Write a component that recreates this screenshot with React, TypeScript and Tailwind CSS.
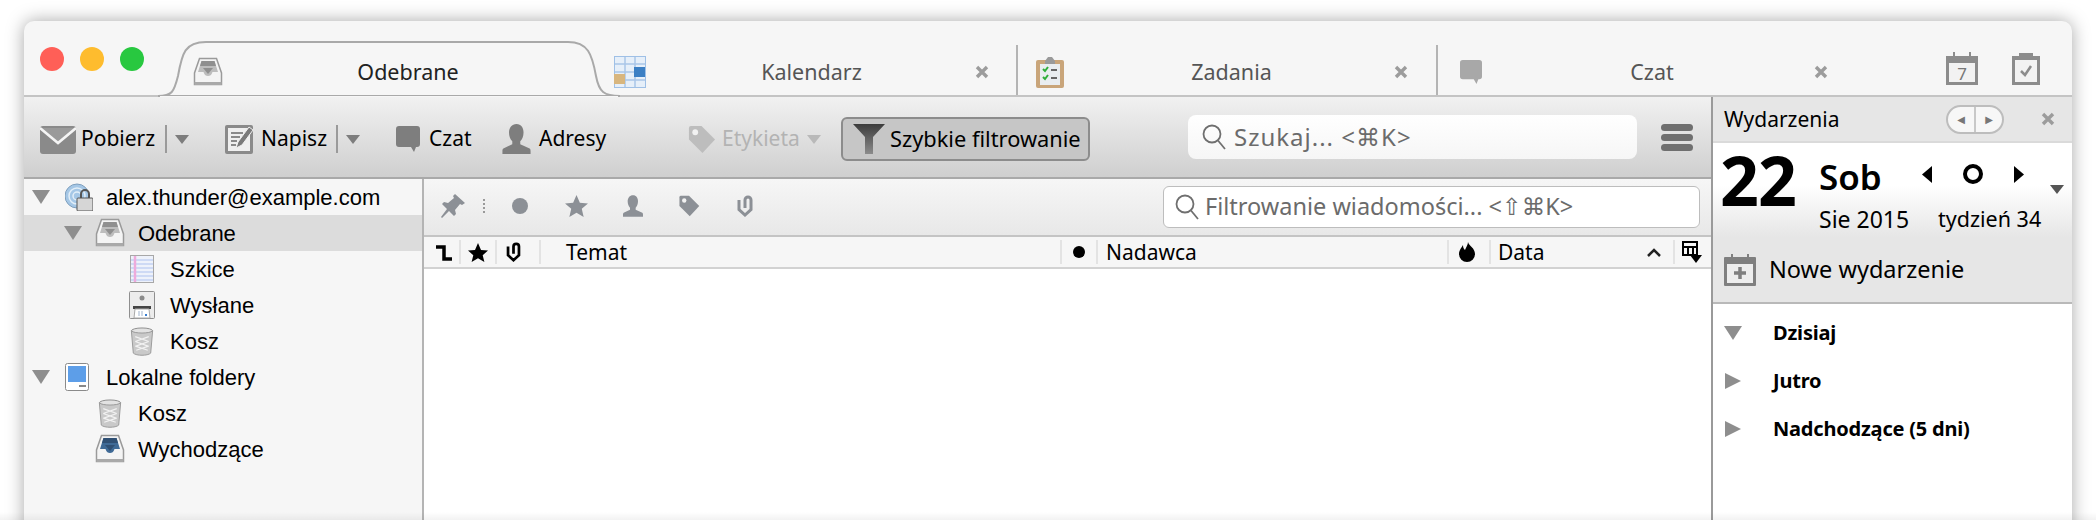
const Tray = ({ dark = false }: { dark?: boolean }) => (
  <svg viewBox="0 0 30 30" className="h-[30px] w-[30px] shrink-0">
    <path d="M6.500 1.500h17L28.500 16v11.500h-27V16z" fill="#f4f4f4" stroke="#9a9a9a" strokeWidth="1.500" />
    <path d="M8.500 4h13l3.500 11h-5.500c-1 3-2.500 4-4.500 4s-3.500-1-4.500-4H5z" fill={dark ? "#3f6a96" : "#bdbdbd"} />
    <path d="M8.500 4h13l1.500 5H7z" fill={dark ? "#2f4f73" : "#8f8f8f"} />
    <path d="M10 11h10l-5 6z" fill={dark ? "#2f4f73" : "#8f8f8f"} />
    <path d="M1.500 25h27v3h-27z" fill="#a9a9a9" />
  </svg>
);

const Trash = () => (
  <svg viewBox="0 0 24 30" className="h-[29px] w-[24px] shrink-0">
    <ellipse cx="12" cy="4" rx="11" ry="3" fill="#e2e2e2" stroke="#8c8c8c" />
    <path d="M1 4l2 23c3 3 15 3 18 0l2-23c-3 3-19 3-22 0z" fill="#c9c9c9" stroke="#999" />
    <path d="M5 10l14 5M19 10L5 15M5 15l14 5M19 15L5 20M6 20l12 4M18 20L6 24" stroke="#f2f2f2" strokeWidth="1.200" />
  </svg>
);

const Caret = ({ open = true, className = "" }: { open?: boolean; className?: string }) => (
  <svg viewBox="0 0 18 16" className={`h-[16px] w-[18px] shrink-0 ${className}`}>
    <path d={open ? "M0 1h18L9 15z" : "M1 0l16 8-16 8z"} fill="#8e8e8e" />
  </svg>
);

const SmallArrow = ({ color = "#7d7d7d" }: { color?: string }) => (
  <svg viewBox="0 0 14 9" className="h-[9px] w-[14px] shrink-0">
    <path d="M0 0h14L7 9z" fill={color} />
  </svg>
);

const CloseIcon = () => (
  <svg viewBox="0 0 14 14" className="h-[14px] w-[14px] shrink-0">
    <path d="M2 2l10 10M12 2L2 12" stroke="#9c9c9c" strokeWidth="3.400" />
  </svg>
);

const Bubble = ({ fill, w, h }: { fill: string; w: number; h: number }) => (
  <svg viewBox="0 0 24 26" width={w} height={h} className="shrink-0">
    <path d="M3 0h18a3 3 0 0 1 3 3v15a3 3 0 0 1-3 3h-1l-2 5-3-5H3a3 3 0 0 1-3-3V3a3 3 0 0 1 3-3z" fill={fill} />
  </svg>
);

const Tag = ({ fill, size }: { fill: string; size: number }) => (
  <svg viewBox="0 0 30 30" width={size} height={size} className="shrink-0">
    <path d="M2 3a2 2 0 0 1 2-2h11l14 14-13 14L2 15z" fill={fill} />
    <circle cx="8.500" cy="7.500" r="3" fill="#f2f2f2" />
  </svg>
);

const Person = ({ fill, w, h }: { fill: string; w: number; h: number }) => (
  <svg viewBox="0 0 30 32" width={w} height={h} className="shrink-0">
    <path d="M15 0c5 0 7.500 4 7.500 9 0 4-1.500 7.500-3.500 9.500v3L29 26c1 .6 1 2 1 3v3H0v-3c0-1 0-2.400 1-3l9.500-4.500v-3C8.500 16.500 7 13 7 9c0-5 3-9 8-9z" fill={fill} />
  </svg>
);

const Magnifier = () => (
  <svg viewBox="0 0 24 26" className="h-[26px] w-[24px] shrink-0" fill="none" stroke="#6f6f6f" strokeWidth="1.800">
    <circle cx="10" cy="10" r="8.500" />
    <path d="M16 16.500l7 8.500" />
  </svg>
);

const Clip = ({ color, w, h }: { color: string; w: number; h: number }) => (
  <svg viewBox="0 0 16 22" width={w} height={h} className="shrink-0" fill="none" stroke={color} strokeWidth="3">
    <path d="M2 5v9.500l6 5.500 6-5.500V5a3 3 0 0 0-6 0v8" />
  </svg>
);

const Sep = ({ className = "" }: { className?: string }) => (
  <span className={`h-[24px] w-[2px] shrink-0 bg-[#e3e3e3] ${className}`} />
);

function Tree({ pl, icon, label, open, selected, gap, labelClass = "" }: {
  pl: number;
  icon: React.ReactNode;
  label: string;
  open?: boolean;
  selected?: boolean;
  gap: string;
  labelClass?: string;
}) {
  return (
    <div
      className={`flex h-[36px] items-center ${selected ? "bg-[#dcdcdc]" : ""} ${gap}`}
      style={{ paddingLeft: pl }}
    >
      {open ? <Caret className={pl === 8 ? "mr-[2px]" : ""} /> : null}
      {icon}
      <span className={`whitespace-nowrap ${labelClass}`}>{label}</span>
    </div>
  );
}

function Toolbar() {
  return (
    <div className="flex h-[82px] shrink-0 items-center border-b-2 border-[#a9a9a9] bg-[linear-gradient(180deg,#f1f1f1_0%,#cfcfcf_100%)] pt-[4px] text-[21px] text-black">
      <svg viewBox="0 0 36 29" className="ml-[16px] h-[29px] w-[36px] shrink-0">
        <rect x="0" y="1" width="36" height="28" rx="3" fill="#8a8a8a" />
        <path d="M0 3l18 15L36 3" fill="#9a9a9a" stroke="#f4f4f4" strokeWidth="2.500" />
      </svg>
      <span className="ml-[5px] w-[74px]">Pobierz</span>
      <span className="ml-[10px] h-[28px] w-[2px] bg-[#9a9a9a]" />
      <span className="ml-[8px]"><SmallArrow /></span>

      <svg viewBox="0 0 28 30" className="ml-[36px] h-[30px] w-[28px] shrink-0">
        <rect x="0" y="1" width="28" height="29" rx="2" fill="#8a8a8a" />
        <rect x="3" y="4" width="22" height="23" fill="#efefef" />
        <path d="M6 9h12M6 13h9M6 17h6M6 21h5" stroke="#8a8a8a" strokeWidth="2" />
        <path d="M11 24l2-6L24 3l4 3-11 15z" fill="#7a7a7a" stroke="#efefef" />
      </svg>
      <span className="ml-[8px] w-[65px]">Napisz</span>
      <span className="ml-[10px] h-[28px] w-[2px] bg-[#9a9a9a]" />
      <span className="ml-[8px]"><SmallArrow /></span>

      <span className="ml-[36px]"><Bubble fill="#7e7e7e" w={24} h={26} /></span>
      <span className="ml-[9px] w-[41px]">Czat</span>
      <span className="ml-[32px]"><Person fill="#7e7e7e" w={29} h={30} /></span>
      <span className="ml-[8px] w-[67px]">Adresy</span>

      <span className="ml-[81px]"><Tag fill="#bdbdbd" size={29} /></span>
      <span className="ml-[6px] w-[79px] text-[#b3b3b3]">Etykieta</span>
      <span className="ml-[6px]"><SmallArrow color="#b9b9b9" /></span>

      <div className="ml-[20px] flex h-[44px] w-[249px] items-center rounded-[6px] border-2 border-[#8c8c8c] bg-[#c6c6c6]">
        <svg viewBox="0 0 32 30" className="ml-[10px] h-[30px] w-[32px] shrink-0">
          <defs>
            <linearGradient id="funnel" x1="0" y1="0" x2="0" y2="1">
              <stop offset="0" stopColor="#3c3c3c" />
              <stop offset="1" stopColor="#8b8b8b" />
            </linearGradient>
          </defs>
          <path d="M0 0h32L20 13v17h-8V13z" fill="url(#funnel)" />
        </svg>
        <span className="ml-[5px] whitespace-nowrap text-[21.8px]">Szybkie filtrowanie</span>
      </div>

      <div className="-mt-[4px] ml-[98px] flex h-[44px] w-[449px] items-center rounded-[8px] bg-[linear-gradient(180deg,#ffffff,#f6f6f6)] pl-[14px] text-[24px] tracking-[1px] text-[#6b6b6b]">
        <Magnifier />
        <span className="ml-[8px] whitespace-nowrap">Szukaj... &lt;⌘K&gt;</span>
      </div>

      <div className="-mt-[3px] ml-[24px] flex w-[32px] flex-col gap-[3px]">
        <span className="h-[7px] rounded-full bg-[#6f6f6f]" />
        <span className="h-[7px] rounded-full bg-[#6f6f6f]" />
        <span className="h-[7px] rounded-full bg-[#6f6f6f]" />
      </div>
    </div>
  );
}

function Sidebar() {
  return (
    <aside className="w-[400px] shrink-0 border-r-2 border-[#b4b4b4] bg-[#f6f6f6] font-['Liberation_Sans',sans-serif] text-[22px] text-black">
      <Tree
        pl={8}
        open
        gap="gap-[13px]"
        label="alex.thunder@example.com"
        icon={
          <svg viewBox="0 0 28 28" className="h-[28px] w-[28px] shrink-0">
            <circle cx="12" cy="13" r="12" fill="#a5c7e6" stroke="#7f9fbd" />
            <circle cx="12" cy="13" r="8" fill="none" stroke="#e2eef8" strokeWidth="1.500" />
            <circle cx="12" cy="13" r="4" fill="none" stroke="#e2eef8" strokeWidth="1.500" />
            <path d="M16 15v-4a4 4 0 0 1 8 0v4" fill="none" stroke="#555" strokeWidth="2" />
            <rect x="12" y="15" width="16" height="13" rx="1" fill="#d6d6d6" stroke="#555" />
          </svg>
        }
      />
      <Tree pl={40} open selected gap="gap-[13px]" label="Odebrane" icon={<Tray />} />
      <Tree
        pl={106}
        gap="gap-[16px]"
        label="Szkice"
        icon={
          <svg viewBox="0 0 24 28" className="h-[28px] w-[24px] shrink-0">
            <rect x="0.500" y="0.500" width="23" height="27" fill="#eef2fb" stroke="#a8a8a8" />
            <path d="M1 5h22M1 9h22M1 13h22M1 17h22M1 21h22M1 25h22" stroke="#c3d2f3" strokeWidth="1.500" />
            <path d="M5 1v26" stroke="#eeabdc" strokeWidth="2.500" />
          </svg>
        }
      />
      <Tree
        pl={105}
        gap="gap-[15px]"
        label="Wysłane"
        icon={
          <svg viewBox="0 0 26 28" className="h-[28px] w-[26px] shrink-0">
            <rect x="0.500" y="0.500" width="25" height="27" rx="1" fill="#ececec" stroke="#8f8f8f" />
            <circle cx="13" cy="7" r="2.500" fill="#8a8a8a" />
            <rect x="4" y="15" width="18" height="3" fill="#444" />
            <path d="M6 18h14l1 9H5z" fill="#fff" stroke="#aaa" />
            <path d="M10 20v5M13 20v5" stroke="#9fb3cc" />
            <rect x="16" y="23" width="2" height="2" fill="#3a7ed0" />
          </svg>
        }
      />
      <Tree pl={106} gap="gap-[16px]" label="Kosz" icon={<Trash />} />
      <Tree
        pl={8}
        open
        gap="gap-[13px]"
        label="Lokalne foldery"
        labelClass="ml-[4px]"
        icon={
          <svg viewBox="0 0 24 28" className="h-[28px] w-[24px] shrink-0">
            <rect x="0.500" y="0.500" width="23" height="27" rx="2" fill="#fff" stroke="#8a8a8a" />
            <rect x="3" y="3" width="18" height="16" fill="#5d9ee8" />
            <rect x="14" y="22" width="7" height="2" fill="#888" />
          </svg>
        }
      />
      <Tree pl={74} gap="gap-[16px]" label="Kosz" icon={<Trash />} />
      <Tree pl={71} gap="gap-[13px]" label="Wychodzące" icon={<Tray dark />} />
    </aside>
  );
}

function MessagePane() {
  return (
    <section className="flex min-w-0 flex-1 flex-col bg-white text-[21px] text-black">
      <div className="flex h-[58px] shrink-0 items-center border-b-2 border-[#c4c4c4] bg-[linear-gradient(180deg,#f6f6f6,#e8e8e8)]">
        <div className="mb-[3px] flex items-center">
          <svg viewBox="0 0 24 24" className="ml-[17px] h-[24px] w-[24px] shrink-0">
            <path d="M14 0l10 9-3 2-2-1-5 6 1 4-2 2-5-5-7 7-1-1 6-8-5-5 2-2 4 1 6-5-1-2z" fill="#8c9096" />
          </svg>
          <span className="ml-[18px] h-[14px] w-[2px] border-l-2 border-dotted border-[#9a9a9a]" />
          <span className="ml-[27px] h-[16px] w-[16px] rounded-full bg-[#8c9096]" />
          <svg viewBox="0 0 24 23" className="ml-[37px] h-[22px] w-[23px] shrink-0">
            <path d="M12 0l3.500 8 8.500.8-6.500 5.700 2 8.500-7.500-4.500L4.500 23l2-8.500L0 8.800 8.500 8z" fill="#8c9096" />
          </svg>
          <span className="ml-[35px]"><Person fill="#8c9096" w={20} h={22} /></span>
          <span className="ml-[35px]"><Tag fill="#8c9096" size={22} /></span>
          <span className="ml-[37px]"><Clip color="#8c9096" w={16} h={22} /></span>
        </div>
        <div className="ml-[410px] flex h-[42px] w-[537px] items-center rounded-[6px] border border-[#bdbdbd] bg-white pl-[11px] text-[23.5px] text-[#6b6b6b]">
          <Magnifier />
          <span className="ml-[6px] whitespace-nowrap">Filtrowanie wiadomości... &lt;⇧⌘K&gt;</span>
        </div>
      </div>
      <div className="flex h-[32px] shrink-0 items-center border-b-2 border-[#d2d2d2] bg-[#f6f6f6]">
        <svg viewBox="0 0 18 18" className="ml-[11px] h-[18px] w-[18px] shrink-0" fill="none" stroke="#000" strokeWidth="3.500">
          <path d="M1 4h8v12h8" />
        </svg>
        <Sep className="ml-[6px]" />
        <svg viewBox="0 0 20 19" className="ml-[7px] h-[19px] w-[20px] shrink-0">
          <path d="M10 0l3 7 7 .6-5.300 4.700 1.700 6.700-6.400-3.700L3.600 19l1.700-6.700L0 7.600 7 7z" fill="#000" />
        </svg>
        <Sep className="ml-[7px]" />
        <span className="ml-[9px]"><Clip color="#000" w={15} h={20} /></span>
        <Sep className="ml-[18px]" />
        <span className="ml-[25px] mt-[2px] w-[61px] whitespace-nowrap">Temat</span>
        <Sep className="ml-[433px]" />
        <span className="ml-[11px] h-[12px] w-[12px] rounded-full bg-black" />
        <Sep className="ml-[11px]" />
        <span className="ml-[8px] mt-[2px] w-[89px] whitespace-nowrap">Nadawca</span>
        <Sep className="ml-[252px]" />
        <svg viewBox="0 0 16 20" className="ml-[10px] h-[20px] w-[16px] shrink-0">
          <path d="M9 0c1 4 7 6 7 12a8 8 0 0 1-16 0C0 8 3 5 4 3c0 3 1 4 2 5 1-3 3-5 3-8z" fill="#000" />
        </svg>
        <Sep className="ml-[14px]" />
        <span className="ml-[7px] mt-[2px] w-[44px] whitespace-nowrap">Data</span>
        <svg viewBox="0 0 14 9" className="ml-[105px] h-[9px] w-[14px] shrink-0" fill="none" stroke="#222" strokeWidth="2.500">
          <path d="M1 8l6-6 6 6" />
        </svg>
        <Sep className="ml-[12px]" />
        <svg viewBox="0 0 20 22" className="ml-[7px] h-[22px] w-[20px] shrink-0">
          <path d="M1 1h14v13H1zM1 6h14M6 6v8M11 6v8" fill="none" stroke="#000" strokeWidth="2" />
          <path d="M8 14h12l-6 8z" fill="#000" />
        </svg>
      </div>
      <div className="flex-1 bg-white" />
    </section>
  );
}

function EventsPanel() {
  return (
    <aside className="flex w-[361px] shrink-0 flex-col border-l-2 border-[#9a9a9a] bg-white text-black">
      <div className="flex h-[46px] shrink-0 items-center border-b-2 border-[#dadada] bg-[#e6e6e6] pl-[11px] text-[21px]">
        <span className="mt-[2px] w-[115px] whitespace-nowrap">Wydarzenia</span>
        <div className="ml-[107px] flex h-[29px] w-[58px] items-center rounded-full border-2 border-[#bdbdbd] bg-[#f7f7f7]">
          <span className="flex flex-1 justify-center text-[10px] leading-none text-[#777]">◀</span>
          <span className="h-full w-[2px] bg-[#c8c8c8]" />
          <span className="flex flex-1 justify-center text-[10px] leading-none text-[#777]">▶</span>
        </div>
        <span className="ml-[37px]"><CloseIcon /></span>
      </div>
      <div className="flex h-[94px] shrink-0 bg-[linear-gradient(180deg,#ffffff_45%,#e6e6e6_100%)]">
        <span className="-mt-[3px] ml-[7px] w-[80px] text-[68px] font-bold leading-[80px] tracking-[-1px]">22</span>
        <div className="ml-[19px] flex w-[86px] flex-col">
          <span className="mt-[16px] text-[35px] font-semibold leading-[36px]">Sob</span>
          <span className="mt-[11px] whitespace-nowrap text-[23px] leading-[26px]">Sie 2015</span>
        </div>
        <div className="ml-[33px] flex flex-col">
          <div className="mt-[21px] flex h-[20px] items-center">
            <svg viewBox="0 0 10 17" className="ml-[-16px] h-[17px] w-[10px]"><path d="M10 0v17L0 8.500z" fill="#000" /></svg>
            <span className="ml-[31px] h-[20px] w-[20px] rounded-full border-[4px] border-black" />
            <svg viewBox="0 0 10 17" className="ml-[31px] h-[17px] w-[10px]"><path d="M0 0v17l10-8.500z" fill="#000" /></svg>
            <span className="ml-[26px] mt-[31px]"><SmallArrow color="#555" /></span>
          </div>
          <span className="mt-[22px] whitespace-nowrap text-[21.5px] leading-[26px]">tydzień 34</span>
        </div>
      </div>
      <div className="flex h-[67px] shrink-0 items-center border-b-2 border-[#b9b9b9] bg-[#e6e6e6] pl-[11px] text-[23.5px]">
        <svg viewBox="0 0 32 32" className="h-[32px] w-[32px] shrink-0">
          <rect x="0" y="3" width="32" height="29" rx="1" fill="#7f7f7f" />
          <rect x="3" y="10" width="26" height="19" fill="#ededed" />
          <path d="M8 0v6M24 0v6" stroke="#7f7f7f" strokeWidth="2" />
          <path d="M16 13v12M10 19h12" stroke="#7f7f7f" strokeWidth="3.500" />
        </svg>
        <span className="ml-[13px] whitespace-nowrap">Nowe wydarzenie</span>
      </div>
      <div className="flex flex-col pt-[5px] text-[20px] font-bold tracking-[-0.2px]">
        {[
          { label: "Dzisiaj", open: true },
          { label: "Jutro", open: false },
          { label: "Nadchodzące (5 dni)", open: false },
        ].map((row) => (
          <div key={row.label} className="flex h-[48px] items-center pl-[11px]">
            <Caret open={row.open} />
            <span className="ml-[31px]">{row.label}</span>
          </div>
        ))}
      </div>
    </aside>
  );
}

export default function App() {
  return (
    <div className="relative h-[520px] w-[2096px] overflow-hidden bg-white pl-[24px] pt-[21px] font-['Noto_Sans','DejaVu_Sans',sans-serif]">
      <div className="flex h-[520px] w-[2048px] flex-col rounded-t-[10px] bg-[#f6f6f6] shadow-[0_0_18px_rgba(0,0,0,0.35)]">
        <div className="relative flex h-[76px] shrink-0 items-end text-[21.5px]">
          <span className="absolute inset-x-0 bottom-0 h-[2px] bg-[#c4c4c4]" />
          <div className="mb-[26px] ml-[16px] flex gap-[16px]">
            <span className="h-[24px] w-[24px] rounded-full bg-[#ff5f57]" />
            <span className="h-[24px] w-[24px] rounded-full bg-[#febc2e]" />
            <span className="h-[24px] w-[24px] rounded-full bg-[#28c840]" />
          </div>
          <div className="relative ml-[14px] flex h-[56px] w-[462px] shrink-0 items-center pl-[35px] pr-[27px] pt-[6px] text-[#222]">
            <svg viewBox="0 0 462 56" className="absolute inset-0 h-[56px] w-[462px]">
              <path d="M0 55c14 0 16-4 20-20C24 12 27 1 48 1h362c20 0 24 12 28 34 3 16 8 20 24 20z" fill="#f6f6f6" stroke="#a9a9a9" strokeWidth="2" />
              <path d="M2 56h458" stroke="#f6f6f6" strokeWidth="2" />
            </svg>
            <span className="relative"><Tray /></span>
            <span className="relative flex-1 text-center">Odebrane</span>
          </div>
          <div className="ml-[-18px] flex h-[56px] w-[414px] shrink-0 items-center pl-[12px] pr-[27px] pt-[6px] text-[#555]">
            <svg viewBox="0 0 32 32" className="relative h-[32px] w-[32px] shrink-0">
              <rect x="0" y="0" width="32" height="32" fill="#9fc0e6" />
              <path d="M1 1h30v30H1z" fill="#e6eff9" />
              <path d="M1 8h30M1 16h30M1 24h30M11 1v30M21 1v30" stroke="#a9c6e8" strokeWidth="1.500" />
              <rect x="20" y="11" width="11" height="10" fill="#3b7fc4" />
              <rect x="0" y="18" width="11" height="10" fill="#d8b67e" />
            </svg>
            <span className="flex-1 pl-[2px] text-center">Kalendarz</span>
            <CloseIcon />
          </div>
          <div className="flex h-[52px] w-[420px] shrink-0 items-center border-l-2 border-[#b4b4b4] pl-[18px] pr-[28px] pt-[2px] text-[#555]">
            <svg viewBox="0 0 28 32" className="h-[32px] w-[28px] shrink-0">
              <rect x="0" y="4" width="28" height="28" rx="2" fill="#c9a57a" />
              <rect x="4" y="8" width="20" height="21" fill="#e9edf0" />
              <path d="M9 5l3-4h4l3 4v3H9z" fill="#9a9a9a" />
              <path d="M7 13l2 2 3-4M7 21l2 2 3-4" stroke="#2eae3a" strokeWidth="2" fill="none" />
              <path d="M15 14h6M15 22h6" stroke="#666" strokeWidth="2" />
            </svg>
            <span className="flex-1 pl-[5px] text-center">Zadania</span>
            <CloseIcon />
          </div>
          <div className="flex h-[52px] w-[420px] shrink-0 items-center border-l-2 border-[#b4b4b4] pl-[22px] pr-[28px] pt-[2px] text-[#555]">
            <Bubble fill="#a8a8a8" w={22} h={24} />
            <span className="flex-1 pl-[8px] text-center">Czat</span>
            <CloseIcon />
          </div>
          <svg viewBox="0 0 32 33" className="mb-[12px] ml-[90px] h-[33px] w-[32px] shrink-0">
            <rect x="0" y="4" width="32" height="29" fill="#8c8c8c" />
            <rect x="3" y="11" width="26" height="19" fill="#f2f2f2" />
            <path d="M8 0v7M24 0v7" stroke="#8c8c8c" strokeWidth="2" />
            <text x="16" y="28" textAnchor="middle" fontSize="17" fill="#777">7</text>
          </svg>
          <svg viewBox="0 0 28 33" className="mb-[12px] ml-[34px] h-[33px] w-[28px] shrink-0">
            <rect x="0" y="4" width="28" height="29" fill="#8c8c8c" />
            <rect x="3" y="8" width="22" height="22" fill="#f2f2f2" />
            <rect x="7" y="1" width="14" height="6" fill="#8c8c8c" />
            <path d="M9 19l4 4 6-9" fill="none" stroke="#8c8c8c" strokeWidth="2.500" />
          </svg>
        </div>
        <div className="flex min-h-0 flex-1">
          <div className="flex min-w-0 flex-1 flex-col">
            <Toolbar />
            <div className="flex min-h-0 flex-1">
              <Sidebar />
              <MessagePane />
            </div>
          </div>
          <EventsPanel />
        </div>
      </div>
      <div className="pointer-events-none absolute inset-x-0 bottom-0 h-[8px] bg-[linear-gradient(180deg,rgba(0,0,0,0),rgba(0,0,0,0.05))]" />
    </div>
  );
}
